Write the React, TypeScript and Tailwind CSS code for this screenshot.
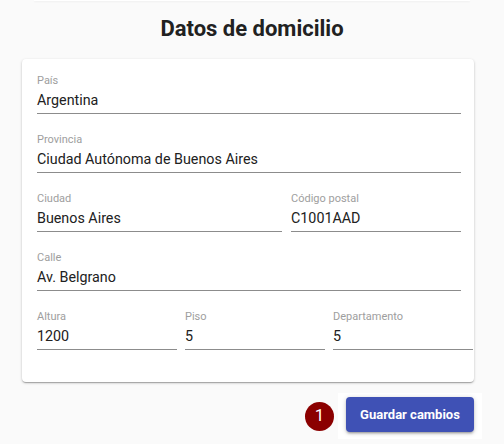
import React from 'react'

interface CampoProps {
  label: string
  valor: string
  className?: string
}

function Campo({ label, valor, className = '' }: CampoProps) {
  return (
    <div className={className}>
      <div className="text-[11px] leading-[13px] text-[#9e9e9e]">{label}</div>
      <div className="pt-[3px] pb-[3px] border-b border-[#8c8c8c] text-[14.3px] leading-[20px] text-[#212121]">
        {valor}
      </div>
    </div>
  )
}

export default function App() {
  return (
    <div className="min-h-[444px] bg-[#fafafa] font-['Roboto',sans-serif]">
      <div className="mx-[34px] h-px bg-white shadow-[0_1px_2px_rgba(0,0,0,0.06)]" />
      <h1 className="mt-[14px] text-center text-[22px] leading-[28px] font-bold text-[#212121]">
        Datos de domicilio
      </h1>
      <div className="mt-[16px] mx-[22px] w-[452px] rounded bg-white pl-[15px] pr-[13px] pt-[15px] pb-[32px] shadow-[0_1px_3px_rgba(0,0,0,0.2),0_1px_1px_rgba(0,0,0,0.14),0_2px_1px_-1px_rgba(0,0,0,0.12)]">
        <div className="flex flex-col gap-[19px]">
          <Campo label="País" valor="Argentina" />
          <Campo label="Provincia" valor="Ciudad Autónoma de Buenos Aires" />
          <div className="grid grid-cols-[245px_1fr] gap-[9px]">
            <Campo label="Ciudad" valor="Buenos Aires" />
            <Campo label="Código postal" valor="C1001AAD" />
          </div>
          <Campo label="Calle" valor="Av. Belgrano" />
          <div className="flex gap-[8px]">
            <Campo label="Altura" valor="1200" className="w-[140px] shrink-0" />
            <Campo label="Piso" valor="5" className="w-[140px] shrink-0" />
            <Campo label="Departamento" valor="5" className="w-[140px] shrink-0" />
          </div>
        </div>
      </div>
      <div className="mt-[11px] mr-[30px] flex items-center justify-end gap-[4px]">
        <div className="flex h-[29px] w-[29px] items-center justify-center rounded-full bg-[#8b0000] text-[17px] text-white">
          1
        </div>
        <div className="bg-white px-[8px] pt-[4px] pb-[7px] -mr-[8px]">
          <button className="h-[35px] w-[128px] rounded bg-[#3f51b5] text-[13px] font-bold text-white shadow-[0_1px_5px_rgba(0,0,0,0.2),0_2px_2px_rgba(0,0,0,0.14),0_3px_1px_-2px_rgba(0,0,0,0.12)]">
            Guardar cambios
          </button>
        </div>
      </div>
    </div>
  )
}
